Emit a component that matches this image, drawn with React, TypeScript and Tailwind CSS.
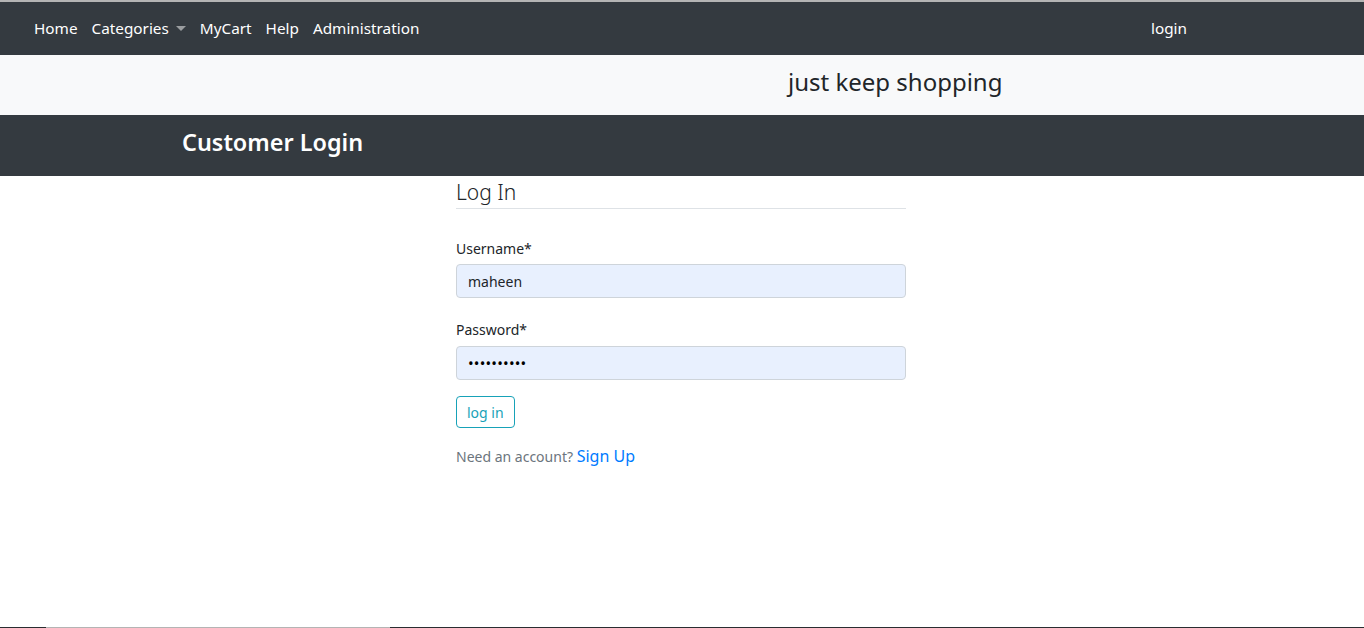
const font = { fontFamily: '"Noto Sans", "Open Sans", sans-serif' };

function NavBar() {
  return (
    <nav className="flex h-[53px] items-center bg-[#343a40] px-[34px] pb-[1px] text-[15.3px] text-white">
      <div className="flex items-center gap-[14px]">
        <span>Home</span>
        <span className="flex items-center">
          Categories
          <span className="ml-[7px] mt-[1px] inline-block h-0 w-0 border-x-[5px] border-t-[5px] border-x-transparent border-t-[#9a9da0]" />
        </span>
        <span>MyCart</span>
        <span>Help</span>
        <span>Administration</span>
      </div>
      <div className="ml-auto mr-[143px]">login</div>
    </nav>
  );
}

export default function App() {
  return (
    <div className="flex h-[628px] flex-col bg-white text-[#212529]" style={font}>
      <div className="h-[2px] bg-[#b4b4b4]" />
      <NavBar />
      <div className="flex h-[60px] items-center bg-[#f8f9fa] pb-[6px] pl-[788px] text-[24px] text-[#212529]">
        just keep shopping
      </div>
      <div className="flex h-[61px] items-center bg-[#343a40] pb-[5px] pl-[182px] text-[23.4px] font-semibold text-white">
        Customer Login
      </div>
      <div className="flex flex-1 justify-center">
        <div className="ml-[-2px] w-[450px]">
          <h2 className="border-b border-[#dee2e6] text-[21px] font-light leading-[32px]">
            Log In
          </h2>
          <form className="mt-[30px] flex flex-col text-[14px]">
            <label className="mb-[5px] leading-[20px]">Username*</label>
            <input
              readOnly
              value="maheen"
              className="h-[34px] rounded-[4px] border border-[#ced4da] bg-[#e8f0fe] px-[11px] text-[14px] text-[#212529] outline-none"
            />
            <label className="mb-[6px] mt-[22px] leading-[20px]">Password*</label>
            <input
              readOnly
              type="password"
              value="maheen1234"
              className="h-[34px] rounded-[4px] border border-[#ced4da] bg-[#e8f0fe] px-[11px] text-[15px] tracking-[0.2px] text-black outline-none"
            />
            <div className="mt-[16px]">
              <button
                type="button"
                className="h-[32px] rounded-[4px] border border-[#17a2b8] px-[10px] text-[14px] text-[#17a2b8]"
              >
                log in
              </button>
            </div>
            <p className="mt-[16px] text-[14px] text-[#6c757d]">
              Need an account? <a className="text-[16px] text-[#007bff]">Sign Up</a>
            </p>
          </form>
        </div>
      </div>
      <div className="flex h-[1px]">
        <div className="w-[46px] bg-[#2a2d31]" />
        <div className="w-[344px] bg-[#b4b4b4]" />
        <div className="flex-1 bg-[#2a2d31]" />
      </div>
    </div>
  );
}
